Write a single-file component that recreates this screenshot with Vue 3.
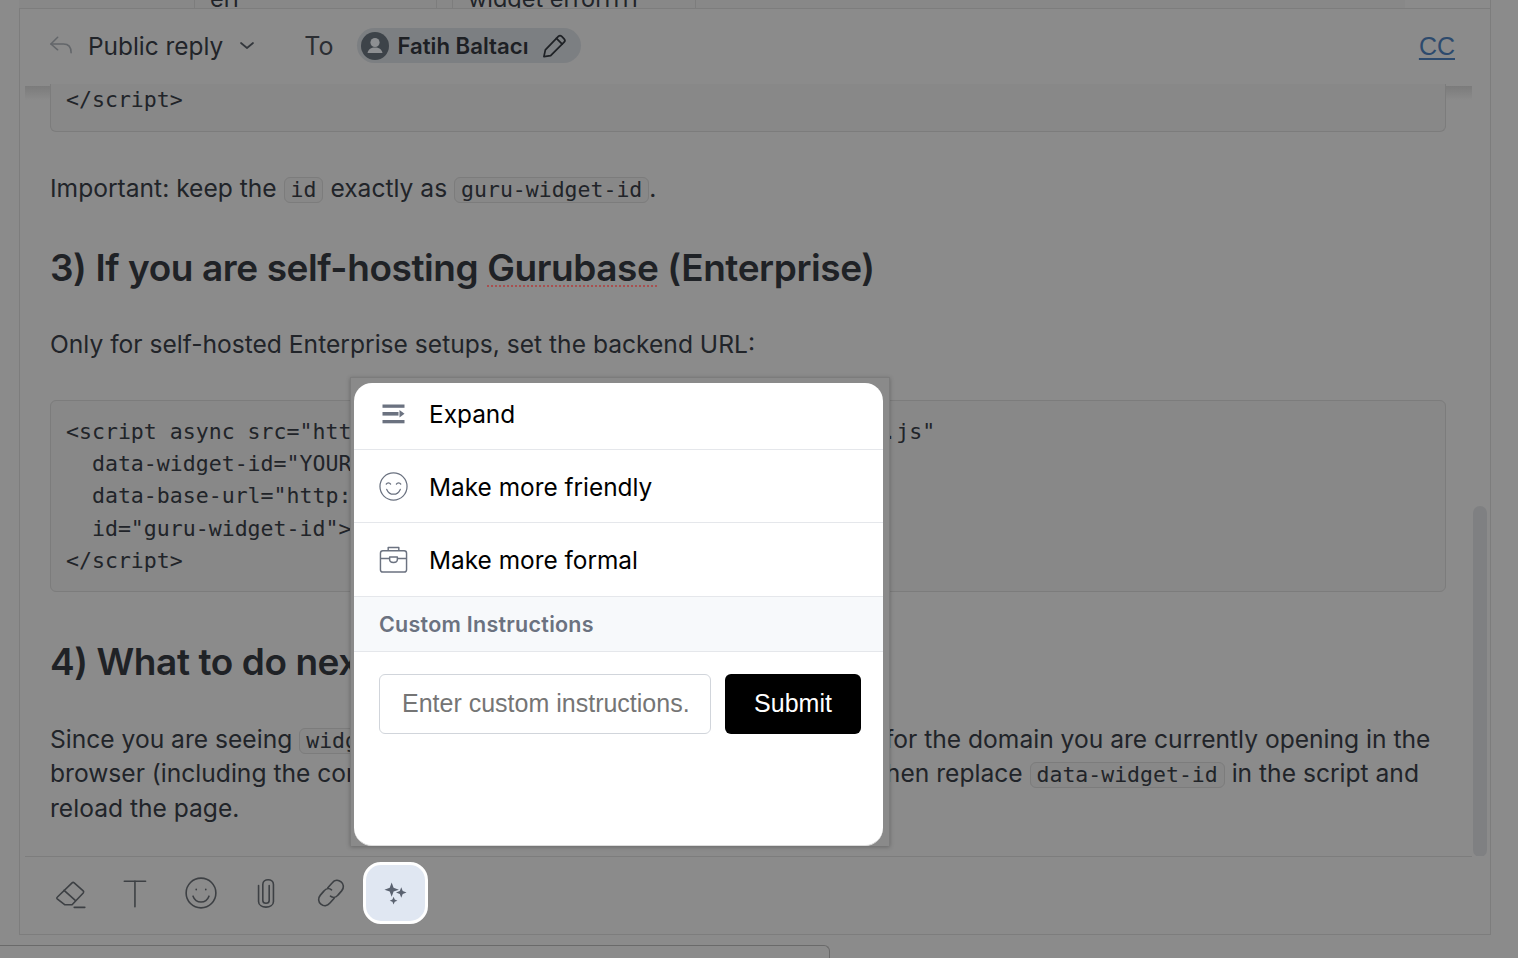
<template>
  <div class="screen">
    <div class="clipped-row">
      <div class="clipped-table">
        <span class="cell cell-key">err</span>
        <span class="cell cell-value">widget errorrrrr</span>
      </div>
    </div>

    <main class="panel">
      <header class="reply-head">
        <svg class="reply-icon" viewBox="0 0 26 20" fill="none" stroke="currentColor" stroke-width="1.6" stroke-linecap="round" stroke-linejoin="round">
          <path d="M9 2 2 9l7 6" />
          <path d="M2 9h13c5 0 8 3 8 9" />
        </svg>
        <span class="reply-type">Public reply</span>
        <svg class="caret" viewBox="0 0 16 10" fill="none" stroke="currentColor" stroke-width="1.7" stroke-linecap="round" stroke-linejoin="round">
          <path d="m2 2 6 5 6-5" />
        </svg>
        <span class="to-label">To</span>
        <div class="recipient">
          <span class="avatar">
            <svg viewBox="0 0 28 28" fill="#8d8f92">
              <circle cx="14" cy="10.5" r="4.6" />
              <path d="M6.5 21c1-4 3.500-5.500 7.500-5.500s6.500 1.500 7.500 5.500z" />
            </svg>
          </span>
          <span class="recipient-name">Fatih Baltacı</span>
          <svg class="pencil" viewBox="0 0 26 26" fill="none" stroke="currentColor" stroke-width="1.8" stroke-linejoin="round" stroke-linecap="round">
            <path d="M2 24l1.500-7L17 3a2.500 2.500 0 0 1 3.500 0L23 5.500A2.500 2.500 0 0 1 23 9L9 23z" />
            <path d="M15 5l6 6" />
          </svg>
        </div>
        <a class="cc-link">CC</a>
      </header>

      <section class="thread">
        <pre class="code-block first">&lt;/script&gt;</pre>

        <p class="text important">Important: keep the <code>id</code> exactly as <code>guru-widget-id</code>.</p>

        <h2>3) If you are self-hosting <span class="misspelled">Gurubase</span> (Enterprise)</h2>

        <p class="text">Only for self-hosted Enterprise setups, set the backend URL:</p>

        <pre class="code-block">&lt;script async src="https://widget.gurubase.io/widget.latest.min.js"
  data-widget-id="YOUR_WIDGET_ID"
  data-base-url="http://localhost:8029/api/v1"
  id="guru-widget-id"&gt;
&lt;/script&gt;</pre>

        <h2 class="next">4) What to do next</h2>

        <p class="text long">Since you are seeing <code>widget error</code>, create a widget ID in your settings for the domain you are currently opening in the<br />browser (including the correct port if you use a local port) and copy id, then replace <code>data-widget-id</code> in the script and<br />reload the page.</p>

        <div class="scrollbar"></div>
      </section>

      <footer class="toolbar">
        <button v-for="tool in tools" :key="tool.name" class="tool" type="button" :aria-label="tool.name">
          <svg viewBox="0 0 32 32" fill="none" stroke="currentColor" stroke-width="1.5" stroke-linecap="round" stroke-linejoin="round">
            <path v-for="d in tool.paths" :key="d" :d="d" />
          </svg>
        </button>
        <button class="tool tool-ai" type="button" aria-label="AI assist">
          <svg viewBox="0 0 26 26" fill="#5a6270">
            <path d="M9 1.500 11 7l5.500 2-5.500 2-2 5.500L7 11 1.500 9 7 7z" />
            <path d="M19 6.500 20.500 10.500 24.500 12 20.500 13.500 19 17.500 17.500 13.500 13.500 12 17.500 10.500z" />
            <path d="M11 16.500 12.200 19.300 15 20.500 12.200 21.700 11 24.500 9.800 21.700 7 20.500 9.800 19.300z" />
          </svg>
        </button>
      </footer>
    </main>

    <div class="status-strip"><div class="status-tab"></div></div>

    <!-- AI menu opened from the sparkle button -->
    <div class="ai-popover">
      <div class="ai-card">
        <div v-for="item in actions" :key="item.label" class="ai-item" :class="item.key">
          <span class="ai-icon">
            <svg v-if="item.key === 'expand'" viewBox="0 0 29 29" fill="currentColor">
              <rect x="3.500" y="4.500" width="22" height="3.300" />
              <rect x="3.500" y="12" width="16" height="3.600" />
              <path d="M20.500 10 25.500 13.800 20.500 17.500z" />
              <rect x="3.500" y="20" width="22" height="3.300" />
            </svg>
            <svg v-else-if="item.key === 'friendly'" viewBox="0 0 30 30" fill="none" stroke="currentColor" stroke-width="1.3" stroke-linecap="round">
              <circle cx="15" cy="15" r="14" />
              <path d="M7.500 12.500c1-1.800 3.500-1.800 4.500 0M18 12.500c1-1.800 3.500-1.800 4.500 0" />
              <path d="M8 18c1.500 3.500 4 5 7 5s5.500-1.500 7-5" />
            </svg>
            <svg v-else viewBox="0 0 30 30" fill="none" stroke="currentColor" stroke-width="1.5" stroke-linejoin="round">
              <rect x="1.500" y="6" width="27" height="22" rx="2.500" />
              <path d="M9.500 6V2.500h11V6" />
              <path d="M1.500 14h9.500M19 14h9.500" />
              <path d="M11 12.500h8v2.500a4 3 0 0 1-8 0z" />
            </svg>
          </span>
          <span>{{ item.label }}</span>
        </div>
        <div class="ai-section">Custom Instructions</div>
        <div class="ai-custom">
          <input class="ai-input" type="text" placeholder="Enter custom instructions..." />
          <button class="ai-submit" type="button">Submit</button>
        </div>
      </div>
    </div>
  </div>
</template>

<script setup>
const actions = [
  { key: 'expand', label: 'Expand' },
  { key: 'friendly', label: 'Make more friendly' },
  { key: 'formal', label: 'Make more formal' }
]

const tools = [
  {
    name: 'Clear formatting',
    paths: ['M3 20 17 6.500a1.500 1.500 0 0 1 2 0l8.500 7.500a1.500 1.500 0 0 1 0 2L17 27H10l-7-5.500a1 1 0 0 1 0-1.500z', 'M9.500 13.500 20 23', 'M19 29.500h10']
  },
  {
    name: 'Text',
    paths: ['M5 5h20', 'M15 5v24']
  },
  {
    name: 'Emoji',
    paths: ['M16 2a14 14 0 1 0 0 28 14 14 0 0 0 0-28z', 'M8.500 19c1.500 4 4 5.500 7.500 5.500s6-1.500 7.500-5.500', 'M11.500 12.500v.5M20.500 12.500v.5']
  },
  {
    name: 'Attach',
    paths: ['M9 9v15c0 7 14 7 14 0V8c0-6-10-6-10 0v15c0 3.500 6 3.500 6 0V9']
  },
  {
    name: 'Link',
    paths: ['M13 11 17 6.500c2.500-3 6-3 8.500-1s3 5.500.5 8.500l-3.500 4c-2 2.500-5 2.500-7 1', 'M19 21l-4 4.500c-2.500 3-6 3-8.500 1s-3-5.500-.5-8.500l3.500-4c2-2.500 5-2.500 7-1']
  }
]
</script>

<style>
html,
body {
  margin: 0;
  background: #8b8b8b;
}
</style>

<style scoped>
.screen {
  position: relative;
  width: 1518px;
  height: 958px;
  overflow: hidden;
  background: #8b8b8b;
  font-family: Inter, "Liberation Sans", sans-serif;
  color: #212429;
}

.clipped-row {
  height: 9px;
  margin-left: 19px;
  width: 1472px;
  box-sizing: border-box;
  border-bottom: 1px solid #7d7d7d;
  border-right: 1px solid #7d7d7d;
  overflow: hidden;
}

.clipped-table {
  display: flex;
  height: 9px;
  width: 1386px;
  background: #888888;
  font-size: 23.500px;
}

.cell {
  position: relative;
  top: -15px;
  line-height: 28px;
  height: 40px;
  box-sizing: border-box;
}

.cell-key {
  width: 243px;
  margin-left: 175px;
  padding-left: 15px;
  border-left: 1px solid #7d7d7d;
  border-right: 1px solid #7d7d7d;
}

.cell-value {
  width: 244px;
  margin-left: 15px;
  padding-left: 15px;
  border-left: 1px solid #7d7d7d;
  border-right: 1px solid #7d7d7d;
}

.panel {
  width: 1472px;
  height: 926px;
  margin-left: 19px;
  box-sizing: border-box;
  border-left: 1px solid #7d7d7d;
  border-right: 1px solid #7d7d7d;
  border-bottom: 1px solid #7d7d7d;
  display: flex;
  flex-direction: column;
}

.reply-head {
  flex: none;
  height: 75px;
  box-sizing: border-box;
  padding: 0 35px 2px 29px;
  display: flex;
  align-items: center;
  font-size: 25px;
}

.reply-icon {
  width: 25px;
  height: 20px;
  margin-top: -2px;
  color: #63666a;
}

.reply-type {
  margin-left: 14px;
  font-size: 24.400px;
  color: #212429;
}

.caret {
  width: 16px;
  height: 10px;
  margin-left: 16px;
  color: #33373c;
}

.to-label {
  margin-left: 49px;
  color: #2b2e33;
}

.recipient {
  margin-left: 24px;
  height: 35px;
  width: 224px;
  box-sizing: border-box;
  padding: 0 13px 0 4px;
  border-radius: 18px;
  background: #7c7f82;
  display: flex;
  align-items: center;
}

.avatar {
  width: 28px;
  height: 28px;
  border-radius: 50%;
  background: #3d4349;
  overflow: hidden;
  flex: none;
}

.avatar svg {
  display: block;
  width: 28px;
  height: 28px;
}

.recipient-name {
  margin-left: 8px;
  width: 130px;
  flex: none;
  white-space: nowrap;
  font-size: 22.200px;
  font-weight: 600;
  color: #1d2024;
}

.pencil {
  width: 25px;
  height: 26px;
  margin-left: 15px;
  color: #1e2125;
}

.cc-link {
  margin-left: auto;
  font-family: "Liberation Sans", sans-serif;
  font-size: 25px;
  line-height: 30px;
  color: #2d4a6d;
  text-decoration: underline;
  text-decoration-thickness: 2px;
  text-underline-offset: 3px;
}

.thread {
  position: relative;
  flex: 1;
  min-height: 0;
  overflow: hidden;
  padding: 0 44px 0 30px;
  /* shadow the sticky header drops on the scroll area */
  background: linear-gradient(#7b7b7b, #8b8b8b) no-repeat 5px 2px / 1447px 14px;
}

.code-block {
  margin: 0;
  box-sizing: border-box;
  width: 1396px;
  height: 192px;
  padding: 15px 15px 0;
  border: 1px solid #7c7c7c;
  border-radius: 6px;
  background: #888888;
  font-family: "DejaVu Sans Mono", "Liberation Mono", monospace;
  font-size: 21.550px;
  line-height: 32.200px;
  color: #212429;
}

.code-block.first {
  height: 48px;
  padding-top: 0;
  border-top: none;
  border-radius: 0 0 6px 6px;
}

.text {
  margin: 0;
  font-size: 24.600px;
  line-height: 34.500px;
}

.text.long {
  white-space: nowrap;
  line-height: 34.400px;
}

.important {
  margin-top: 39px;
}

h2 {
  margin: 39px 0 36px;
  font-size: 37px;
  line-height: 46px;
  font-weight: 600;
  letter-spacing: -0.42px;
  color: #1f2226;
}

h2.next {
  margin-top: 47px;
  margin-bottom: 37px;
}

.text + .code-block {
  margin-top: 39px;
}

.misspelled {
  text-decoration: underline dotted #a85050;
  text-underline-offset: 5px;
  text-decoration-thickness: 2px;
}

code {
  display: inline-block;
  padding: 0 6px;
  border: 1px solid #7c7c7c;
  border-radius: 6px;
  background: #888888;
  font-family: "DejaVu Sans Mono", "Liberation Mono", monospace;
  font-size: 21.500px;
  line-height: 24px;
}

.scrollbar {
  position: absolute;
  top: 422px;
  right: 3px;
  width: 14px;
  height: 351px;
  border-radius: 7px;
  background: #7f8082;
}

.toolbar {
  flex: none;
  height: 78px;
  box-sizing: border-box;
  margin-left: 5px;
  width: 1447px;
  border-top: 1px solid #7d7d7d;
  padding: 5px 0 0 28px;
  display: flex;
  align-items: flex-start;
  gap: 29px;
}

.tool {
  width: 36px;
  height: 61px;
  padding: 0;
  border: none;
  background: none;
  color: #3d4044;
  display: flex;
  align-items: center;
  justify-content: center;
}

.tool svg {
  width: 34px;
  height: 34px;
}

.tool-ai {
  width: 65px;
  height: 62px;
  margin-left: -15px;
  box-sizing: border-box;
  border: 3px solid #ffffff;
  border-radius: 18px;
  background: #e0e7f2;
}

.tool-ai svg {
  width: 25px;
  height: 25px;
}

.status-strip {
  height: 23px;
  box-sizing: border-box;
  padding-top: 10px;
}

.status-tab {
  width: 830px;
  height: 20px;
  box-sizing: border-box;
  border-top: 1px solid #6a6a6a;
  border-right: 1px solid #6a6a6a;
  border-top-right-radius: 6px;
}

.ai-popover {
  position: absolute;
  left: 350px;
  top: 377px;
  width: 540px;
  height: 469px;
  box-sizing: border-box;
  padding: 5px 6px 0 4px;
  border: 1px solid #7c7c7c;
  border-bottom: none;
  background: #8a8a8a;
  box-shadow: 0 1px 4px rgba(0, 0, 0, 0.25);
}

.ai-card {
  height: 100%;
  margin-left: -1px;
  box-sizing: border-box;
  border-bottom: 1px solid #dcdcdc;
  border-radius: 18px;
  background: #ffffff;
  overflow: hidden;
  color: #000000;
  font-size: 24.400px;
}

.ai-item {
  display: flex;
  align-items: center;
  gap: 21px;
  height: 73px;
  box-sizing: border-box;
  padding: 1px 0 0 25px;
  border-bottom: 1px solid #e5e7eb;
}

.ai-item.expand {
  height: 67px;
  padding: 0 0 5px 25px;
}

.ai-item.expand .ai-icon {
  margin-top: 2px;
}

.ai-item.formal {
  height: 74px;
  padding-top: 0;
}

.ai-icon {
  width: 29px;
  height: 29px;
  color: #6b7280;
  flex: none;
}

.ai-icon svg {
  display: block;
  width: 29px;
  height: 29px;
}

.ai-section {
  height: 55px;
  box-sizing: border-box;
  padding-left: 25px;
  border-bottom: 1px solid #e5e7eb;
  background: #f7f9fb;
  font-size: 21.500px;
  font-weight: 600;
  letter-spacing: 0.25px;
  line-height: 54px;
  color: #6b7280;
}

.ai-custom {
  display: flex;
  gap: 14px;
  padding: 22px 22px 0 25px;
}

.ai-input {
  flex: none;
  width: 332px;
  height: 60px;
  box-sizing: border-box;
  padding: 0 22px 2px;
  border: 1px solid #d1d5db;
  border-radius: 6px;
  outline: none;
  background: #ffffff;
  font-family: "Liberation Sans", sans-serif;
  font-size: 25px;
}

.ai-input::placeholder {
  color: #757575;
  opacity: 1;
}

.ai-submit {
  flex: none;
  width: 136px;
  height: 60px;
  padding: 0 0 2px;
  border: none;
  border-radius: 6px;
  background: #000000;
  color: #ffffff;
  font-family: "Liberation Sans", sans-serif;
  font-size: 25px;
}
</style>
